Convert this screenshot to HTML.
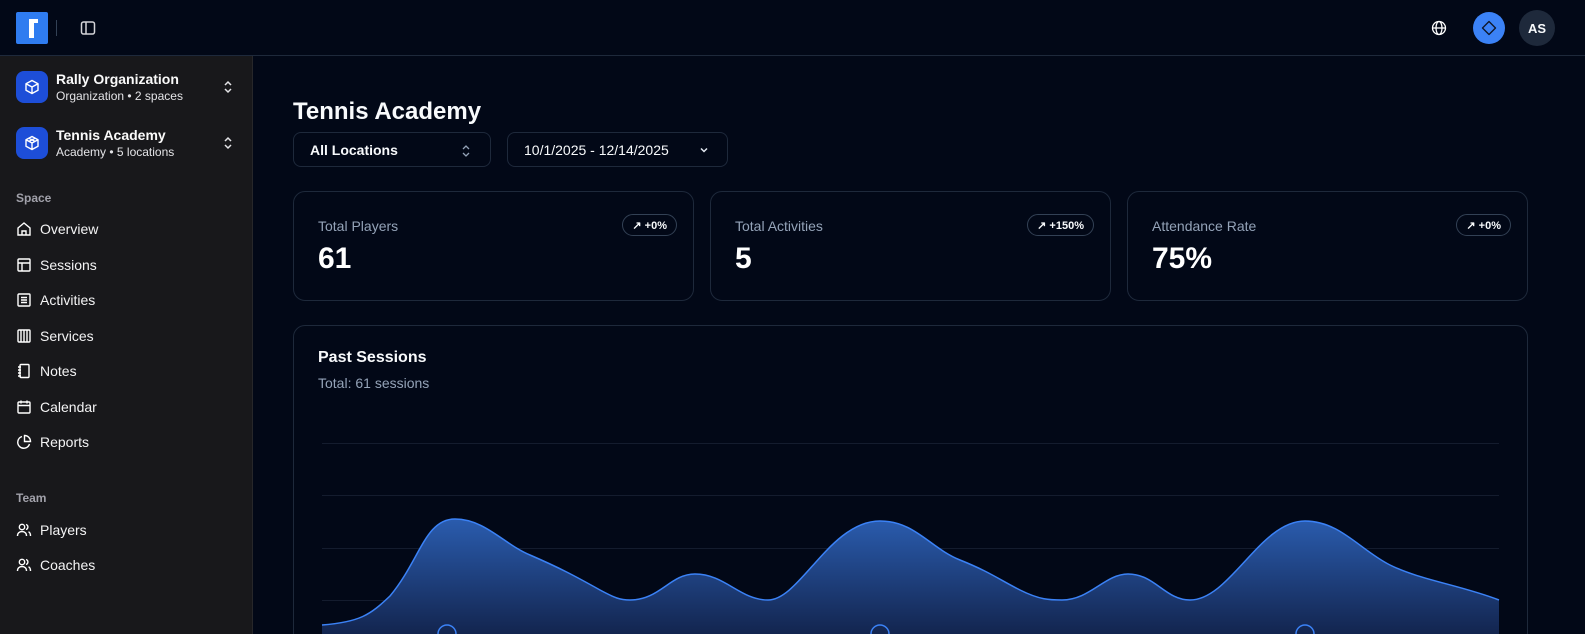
<!DOCTYPE html>
<html><head><style>
*{box-sizing:border-box;margin:0;padding:0}
html{width:1585px;height:634px;overflow:hidden}
body{width:1585px;height:634px;overflow:hidden;background:#020817;font-family:"Liberation Sans",sans-serif;color:#f8fafc;position:relative}
.hdr{position:absolute;left:0;top:0;width:1585px;height:56px;border-bottom:1px solid #1e293b;background:#020817}
.side{position:absolute;left:0;top:56px;width:253px;height:578px;background:#18181b;border-right:1px solid #27272a}
.ws{position:absolute;left:16px;display:flex;align-items:center}
.ws .ic{width:32px;height:32px;border-radius:8px;background:#1d4ed8;display:flex;align-items:center;justify-content:center}
.ws .t{margin-left:8px}
.ws .t b{display:block;font-size:14px;font-weight:bold;color:#fafafa}
.ws .t span{display:block;font-size:12px;color:#e4e4e7;margin-top:2px}
.chev{position:absolute;left:222px}
.lab{position:absolute;left:16px;font-size:12px;color:#a1a1aa;font-weight:bold}
.nav{position:absolute;left:16px;display:flex;align-items:center;font-size:14px;color:#f4f4f5}
.nav svg{margin-right:8px}
.card{position:absolute;border:1px solid #1e293b;border-radius:12px;background:#020817}
.card .l{position:absolute;left:24px;top:26px;font-size:14px;color:#94a3b8}
.card .v{position:absolute;left:24px;top:50px;font-size:30px;font-weight:bold;color:#fff}
.badge{position:absolute;right:16px;top:22px;height:22px;border:1px solid #334155;border-radius:11px;font-size:11px;font-weight:bold;display:flex;align-items:center;padding:0 9px;gap:4px}
.sel{position:absolute;top:132px;height:35px;border:1px solid #1e293b;border-radius:8px;font-size:14px;display:flex;align-items:center}
</style></head><body>
<div class="hdr">
 <div style="position:absolute;left:16px;top:12px;width:32px;height:32px;background:#2f7cf0;border-radius:2px"><div style="position:absolute;left:13px;top:7px;width:5px;height:19px;background:#fff"></div><div style="position:absolute;left:13px;top:7px;width:9px;height:4px;background:#fff"></div></div>
 <div style="position:absolute;left:56px;top:20px;width:1px;height:16px;background:#334155"></div>
 <svg style="position:absolute;left:80px;top:20px" width="16" height="16" viewBox="0 0 16 16" fill="none" stroke="#d4d4d8" stroke-width="1.5"><rect x="1.5" y="2" width="13" height="12" rx="2"/><line x1="6" y1="2" x2="6" y2="14"/></svg>
 <svg style="position:absolute;left:1431px;top:20px" width="16" height="16" viewBox="0 0 16 16" fill="none" stroke="#fff" stroke-width="1.3"><circle cx="8" cy="8" r="6.5"/><ellipse cx="8" cy="8" rx="3" ry="6.5"/><line x1="1.5" y1="8" x2="14.5" y2="8"/></svg>
 <div style="position:absolute;left:1473px;top:12px;width:32px;height:32px;border-radius:50%;background:#3b82f6"><svg style="position:absolute;left:8px;top:8px" width="16" height="16" viewBox="0 0 16 16" fill="none" stroke="#0f172a" stroke-width="1.4"><path d="M8 1.5L14.5 8L8 14.5L1.5 8Z" stroke-linejoin="round"/></svg></div>
 <div style="position:absolute;left:1519px;top:10px;width:36px;height:36px;border-radius:50%;background:#1e293b;font-size:13px;font-weight:bold;display:flex;align-items:center;justify-content:center">AS</div>
</div>
<div class="side">
 <div class="ws" style="top:15px"><div class="ic"><svg width="16" height="16" viewBox="0 0 16 16" fill="none" stroke="#fff" stroke-width="1.4"><path d="M8 1.5L14 4.8V11.2L8 14.5L2 11.2V4.8Z M2 4.8L8 8L14 4.8 M8 8V14.5" stroke-linejoin="round"/></svg></div><div class="t"><b>Rally Organization</b><span>Organization • 2 spaces</span></div></div>
 <svg class="chev" style="top:23px" width="12" height="16" viewBox="0 0 12 16" fill="none" stroke="#e4e4e7" stroke-width="1.5"><path d="M3 6L6 3L9 6M3 10L6 13L9 10"/></svg>
 <div class="ws" style="top:71px"><div class="ic"><svg width="16" height="16" viewBox="0 0 16 16" fill="none" stroke="#fff" stroke-width="1.4"><path d="M8 1.5L14 4.8V11.2L8 14.5L2 11.2V4.8Z M2 4.8L8 8L14 4.8 M8 8V14.5 M5 3.2L11 6.4 M11 3.2L5 6.4" stroke-linejoin="round"/></svg></div><div class="t"><b>Tennis Academy</b><span>Academy • 5 locations</span></div></div>
 <svg class="chev" style="top:79px" width="12" height="16" viewBox="0 0 12 16" fill="none" stroke="#e4e4e7" stroke-width="1.5"><path d="M3 6L6 3L9 6M3 10L6 13L9 10"/></svg>
 <div class="lab" style="top:135px">Space</div>
 <div class="nav" style="top:165px"><svg width="16" height="16" viewBox="0 0 16 16" fill="none" stroke="#fff" stroke-width="1.4"><path d="M2 7L8 2L14 7V14H2Z M6 14V10H10V14"/></svg>Overview</div>
 <div class="nav" style="top:201px"><svg width="16" height="16" viewBox="0 0 16 16" fill="none" stroke="#fff" stroke-width="1.4"><rect x="2" y="2" width="12" height="12" rx="1"/><path d="M2 6H14M6 6V14"/></svg>Sessions</div>
 <div class="nav" style="top:236px"><svg width="16" height="16" viewBox="0 0 16 16" fill="none" stroke="#fff" stroke-width="1.4"><rect x="2" y="2" width="12" height="12" rx="1"/><path d="M5 5.5H11M5 8H11M5 10.5H11"/></svg>Activities</div>
 <div class="nav" style="top:272px"><svg width="16" height="16" viewBox="0 0 16 16" fill="none" stroke="#fff" stroke-width="1.4"><rect x="2" y="2" width="12" height="12" rx="1"/><path d="M5 2V14M8 2V14M11 2V14"/></svg>Services</div>
 <div class="nav" style="top:307px"><svg width="16" height="16" viewBox="0 0 16 16" fill="none" stroke="#fff" stroke-width="1.4"><rect x="4" y="1.5" width="9" height="13" rx="1"/><path d="M2 4H5M2 7H5M2 10H5M2 13H5"/></svg>Notes</div>
 <div class="nav" style="top:343px"><svg width="16" height="16" viewBox="0 0 16 16" fill="none" stroke="#fff" stroke-width="1.4"><rect x="2" y="3" width="12" height="11" rx="1"/><path d="M2 6.5H14M5 1.5V4.5M11 1.5V4.5"/></svg>Calendar</div>
 <div class="nav" style="top:378px"><svg width="16" height="16" viewBox="0 0 16 16" fill="none" stroke="#fff" stroke-width="1.4"><path d="M13.5 10A6 6 0 1 1 6 2.5 M8.5 1.5A6 6 0 0 1 14.5 7.5H8.5Z"/></svg>Reports</div>
 <div class="lab" style="top:435px">Team</div>
 <div class="nav" style="top:466px"><svg width="16" height="16" viewBox="0 0 16 16" fill="none" stroke="#fff" stroke-width="1.4"><circle cx="6" cy="5" r="2.7"/><path d="M1.5 14C1.5 11 3.5 9.5 6 9.5S10.5 11 10.5 14 M10 2.5A2.6 2.6 0 0 1 10 7.5 M12.5 9.8C14 10.5 14.5 12 14.5 14"/></svg>Players</div>
 <div class="nav" style="top:501px"><svg width="16" height="16" viewBox="0 0 16 16" fill="none" stroke="#fff" stroke-width="1.4"><circle cx="6" cy="5" r="2.7"/><path d="M1.5 14C1.5 11 3.5 9.5 6 9.5S10.5 11 10.5 14 M10 2.5A2.6 2.6 0 0 1 10 7.5 M12.5 9.8C14 10.5 14.5 12 14.5 14"/></svg>Coaches</div>
</div>
<div style="position:absolute;left:293px;top:98px;font-size:24px;font-weight:bold">Tennis Academy</div>
<div class="sel" style="left:293px;width:198px;padding-left:16px;font-weight:bold">All Locations<svg style="position:absolute;left:166px;top:10px" width="12" height="16" viewBox="0 0 12 16" fill="none" stroke="#94a3b8" stroke-width="1.3"><path d="M3 6L6 3L9 6M3 10L6 13L9 10"/></svg></div>
<div class="sel" style="left:507px;width:221px;padding-left:16px">10/1/2025 - 12/14/2025<svg style="position:absolute;left:190px;top:11px" width="12" height="12" viewBox="0 0 12 12" fill="none" stroke="#e2e8f0" stroke-width="1.5"><path d="M3 4.5L6 7.5L9 4.5"/></svg></div>
<div class="card" style="left:293px;top:191px;width:401px;height:110px"><div class="l">Total Players</div><div class="v">61</div><div class="badge">↗ +0%</div></div>
<div class="card" style="left:710px;top:191px;width:401px;height:110px"><div class="l">Total Activities</div><div class="v">5</div><div class="badge">↗ +150%</div></div>
<div class="card" style="left:1127px;top:191px;width:401px;height:110px"><div class="l">Attendance Rate</div><div class="v">75%</div><div class="badge">↗ +0%</div></div>
<div class="card" style="left:293px;top:325px;width:1235px;height:320px">
 <div style="position:absolute;left:24px;top:23px;font-size:16px;font-weight:bold">Past Sessions</div>
 <div style="position:absolute;left:24px;top:49px;font-size:14px;color:#94a3b8">Total: 61 sessions</div>
</div>
<svg style="position:absolute;left:0;top:0" width="1585" height="634">
 <defs><linearGradient id="g" x1="0" y1="0" x2="0" y2="1"><stop offset="0" stop-color="#2a5cae"/><stop offset="1" stop-color="#13254f"/></linearGradient></defs>
 <g stroke="#141c2e" stroke-width="1"><line x1="322" y1="443.5" x2="1499" y2="443.5"/><line x1="322" y1="495.5" x2="1499" y2="495.5"/><line x1="322" y1="548.5" x2="1499" y2="548.5"/><line x1="322" y1="600.5" x2="1499" y2="600.5"/></g>
 <path d="M322 625C360 622 370 615 390 596C420 560 425 519 455 519C485 519 505 545 530 555C560 568 575 576 600 590C615 598 620 600 630 600C660 600 670 574 695 574C725 574 740 600 768 600C800 600 830 521 880 521C915 521 930 548 960 560C990 572 1000 580 1020 590C1040 600 1050 600 1062 600C1090 600 1105 574 1128 574C1155 574 1165 600 1190 600C1230 600 1260 521 1305 521C1340 521 1360 550 1390 565C1420 580 1460 585 1499 600V634H322Z" fill="url(#g)"/>
 <path d="M322 625C360 622 370 615 390 596C420 560 425 519 455 519C485 519 505 545 530 555C560 568 575 576 600 590C615 598 620 600 630 600C660 600 670 574 695 574C725 574 740 600 768 600C800 600 830 521 880 521C915 521 930 548 960 560C990 572 1000 580 1020 590C1040 600 1050 600 1062 600C1090 600 1105 574 1128 574C1155 574 1165 600 1190 600C1230 600 1260 521 1305 521C1340 521 1360 550 1390 565C1420 580 1460 585 1499 600" fill="none" stroke="#3b82f6" stroke-width="1.5"/>
 <g fill="none" stroke="#3b82f6" stroke-width="1.5"><circle cx="447" cy="634" r="9"/><circle cx="880" cy="634" r="9"/><circle cx="1305" cy="634" r="9"/></g>
</svg>
</body></html>
